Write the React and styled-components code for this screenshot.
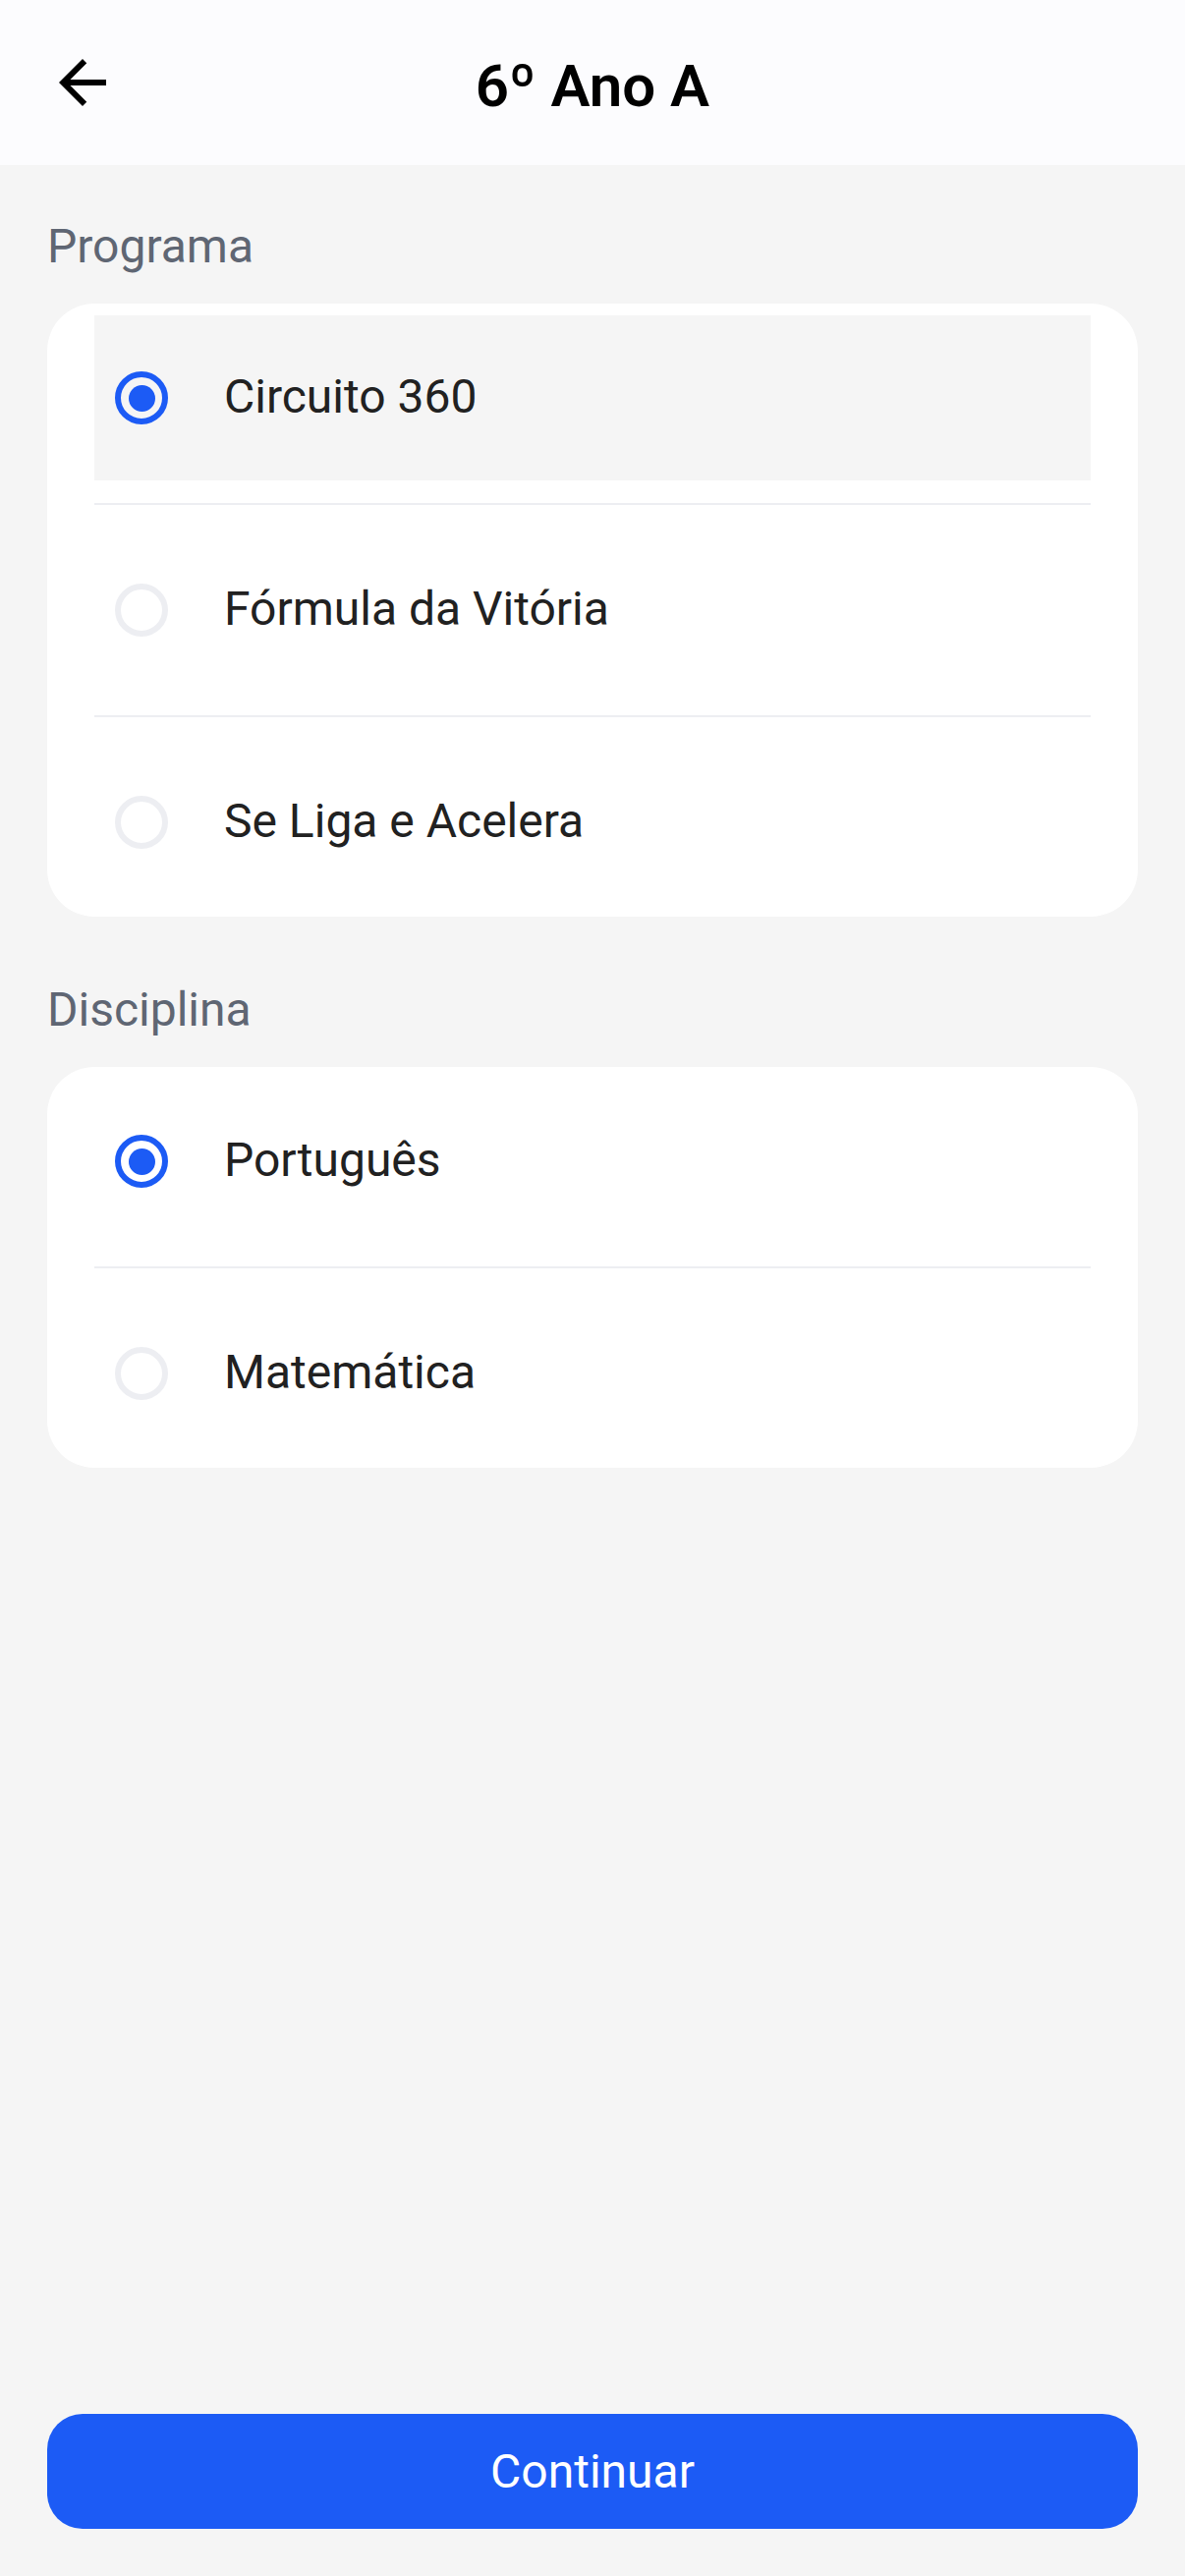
import React from 'react'
import styled, { createGlobalStyle } from 'styled-components'
import { MdArrowBack } from 'react-icons/md'

const GlobalStyle = createGlobalStyle`
  * {
    box-sizing: border-box;
  }
  body {
    margin: 0;
    background-color: #f5f5f5;
    font-family: Roboto, sans-serif;
  }
`

const Container = styled.form`
  min-height: 100vh;
  display: flex;
  flex-direction: column;
`

const Header = styled.header`
  display: grid;
  grid-template-columns: 1fr auto 1fr;
  align-items: end;
  padding: 48px;
  background-color: #fcfcfe;
`

const BotaoVoltar = styled.button`
  display: flex;
  justify-self: start;
  padding: 0;
  border: none;
  background: none;
  color: black;
  font-size: 72px;
  cursor: pointer;
`

const Titulo = styled.h1`
  margin: 0;
  font-size: 60px;
  line-height: 64px;
  font-weight: 600;
  color: black;
`

const Conteudo = styled.main`
  flex: 1;
  display: flex;
  flex-direction: column;
  gap: 60px;
  padding: 48px;
`

const Grupo = styled.fieldset`
  margin: 0;
  padding: 0;
  border: none;
  min-width: 0;
`

const NomeGrupo = styled.legend`
  padding: 0;
  margin-bottom: 23px;
  font-size: 48px;
  line-height: 70px;
  color: #5f6673;
`

const Cartao = styled.div`
  padding: 12px 48px;
  border-radius: 48px;
  background-color: white;
`

const Opcao = styled.label`
  display: flex;
  align-items: center;
  gap: 57px;
  height: 168px;
  padding-left: 21px;
  background-color: ${(props) => (props.$destaque ? '#f5f5f5' : 'transparent')};
  cursor: pointer;
`

const TextoOpcao = styled.span`
  padding-bottom: 3px;
  font-size: 48px;
  line-height: 56px;
  color: #212121;
`

const Radio = styled.input`
  appearance: none;
  flex: none;
  display: grid;
  place-items: center;
  width: 54px;
  height: 54px;
  margin: 0;
  border: 6px solid #edeef2;
  border-radius: 50%;

  &:checked {
    border-color: #1c5bf5;
  }
  &:checked::before {
    content: '';
    width: 27px;
    height: 27px;
    border-radius: 50%;
    background-color: #1c5bf5;
  }
`

const Divisor = styled.hr`
  height: 2px;
  margin: 23px 0;
  border: none;
  background-color: #edeef2;
`

const Rodape = styled.footer`
  padding: 0 48px 48px;
`

const BotaoContinuar = styled.button`
  width: 100%;
  height: 117px;
  border: none;
  border-radius: 36px;
  background-color: #1c5bf5;
  color: white;
  font-family: inherit;
  font-size: 48px;
  cursor: pointer;
`

const programas = ['Circuito 360', 'Fórmula da Vitória', 'Se Liga e Acelera']
const disciplinas = ['Português', 'Matemática']

function GrupoOpcoes({ nome, titulo, opcoes, valor, destaque, onChange }) {
  return (
    <Grupo>
      <NomeGrupo>{titulo}</NomeGrupo>
      <Cartao>
        {opcoes.map((opcao, index) => (
          <React.Fragment key={opcao}>
            {index > 0 && <Divisor />}
            <Opcao $destaque={opcao === destaque}>
              <Radio
                type="radio"
                name={nome}
                value={opcao}
                checked={opcao === valor}
                onChange={onChange}
              />
              <TextoOpcao>{opcao}</TextoOpcao>
            </Opcao>
          </React.Fragment>
        ))}
      </Cartao>
    </Grupo>
  )
}

export default class App extends React.Component {
  state = {
    programa: 'Circuito 360',
    disciplina: 'Português',
    ultimaOpcao: 'Circuito 360',
  }

  onChangeOpcao = (event) => {
    this.setState({
      [event.target.name]: event.target.value,
      ultimaOpcao: event.target.value,
    })
  }

  continuar = (event) => {
    event.preventDefault()
  }

  render() {
    return (
      <Container onSubmit={this.continuar}>
        <GlobalStyle />
        <Header>
          <BotaoVoltar type="button" aria-label="Voltar">
            <MdArrowBack />
          </BotaoVoltar>
          <Titulo>6º Ano A</Titulo>
        </Header>
        <Conteudo>
          <GrupoOpcoes
            nome="programa"
            titulo="Programa"
            opcoes={programas}
            valor={this.state.programa}
            destaque={this.state.ultimaOpcao}
            onChange={this.onChangeOpcao}
          />
          <GrupoOpcoes
            nome="disciplina"
            titulo="Disciplina"
            opcoes={disciplinas}
            valor={this.state.disciplina}
            destaque={this.state.ultimaOpcao}
            onChange={this.onChangeOpcao}
          />
        </Conteudo>
        <Rodape>
          <BotaoContinuar type="submit">Continuar</BotaoContinuar>
        </Rodape>
      </Container>
    )
  }
}
